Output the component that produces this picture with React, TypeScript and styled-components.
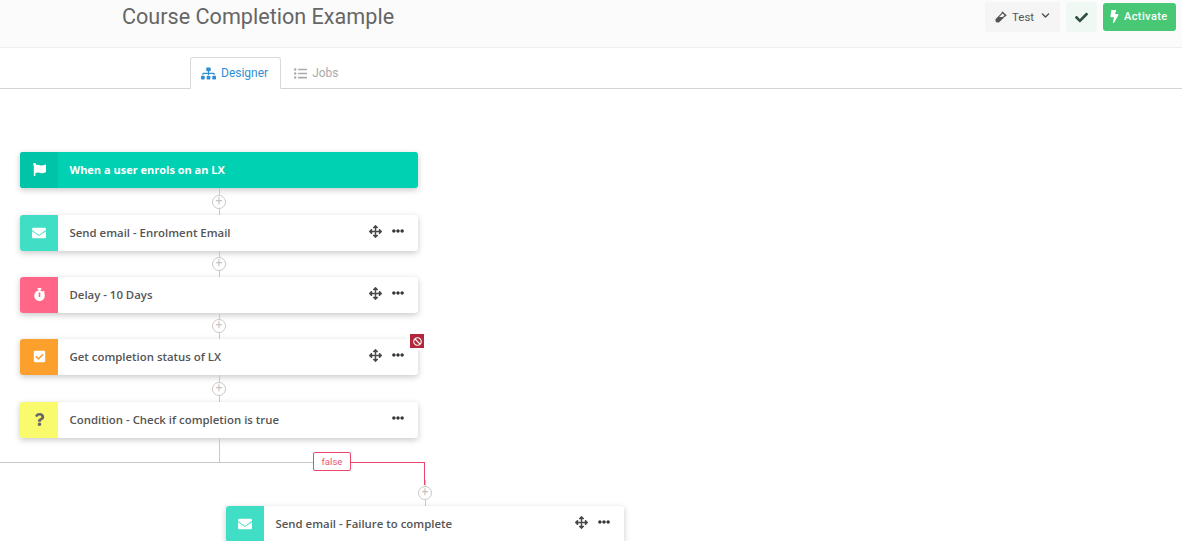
import React from "react";
import styled, { createGlobalStyle } from "styled-components";
import { FaFlag, FaEnvelope, FaStopwatch, FaCheckSquare, FaQuestion, FaArrowsAlt, FaEllipsisH, FaVial, FaBolt, FaCheck, FaChevronDown, FaSitemap, FaListUl, FaBan } from "react-icons/fa";

const Global = createGlobalStyle`
  html, body { margin: 0; padding: 0; background: #fff; height: 100%; overflow: hidden; }
  * { box-sizing: border-box; }
`;
const Page = styled.div`width: 1182px; height: 541px; overflow: hidden; font-family: Roboto, sans-serif;`;
const Header = styled.header`
  height: 48px; background: #fbfbfb; border-bottom: 1px solid #efefef;
  display: flex; justify-content: space-between; padding: 2px 6px 0 122px;
`;
const Title = styled.h1`margin: 0; font: 400 21.6px/29px Roboto, sans-serif; color: #666;`;
const Actions = styled.div`display: flex; align-items: flex-start; gap: 6px;`;
const TestButton = styled.div`
  width: 75px; height: 30px; background: #f5f5f5; border-radius: 3px; color: #555;
  display: flex; align-items: center; gap: 5px; padding-left: 10px; font-size: 11.5px;
  svg:last-child { margin-left: 2px; margin-top: -3px; }
`;
const CheckButton = styled.div`
  width: 31px; height: 30px; background: #eff8f3; border-radius: 3px; color: #2f4f3f;
  display: flex; align-items: center; justify-content: center;
`;
const ActivateButton = styled.div`
  width: 73px; height: 28px; margin-top: 1px; padding-bottom: 2px; background: #48c774; border-radius: 3px; color: #fff;
  display: flex; align-items: center; gap: 3px; padding-left: 5px; font-size: 11px; font-weight: 500; letter-spacing: .4px;
`;
const Tabs = styled.nav`height: 41px; border-bottom: 1px solid #d4d4d4; display: flex; align-items: flex-end; padding-left: 190px;`;
const Tab = styled.div<{ $active?: boolean }>`
  height: 32px; margin-bottom: -1px; display: flex; align-items: center; gap: 5px; font-size: 12px;
  padding: 0 12px 0 ${p => (p.$active ? 10 : 12)}px;
  color: ${p => (p.$active ? "#2f8fd6" : "#aaa")};
  background: ${p => (p.$active ? "#fff" : "transparent")};
  border: 1px solid ${p => (p.$active ? "#d9d9d9" : "transparent")};
  border-bottom-color: ${p => (p.$active ? "#fff" : "transparent")};
  border-radius: 3px 3px 0 0;
`;
const Canvas = styled.main`position: relative; height: 452px; padding: 63px 0 0 20px;`;
const Flow = styled.div`width: 398px; display: flex; flex-direction: column;`;
const Card = styled.div<{ $main?: boolean }>`
  position: relative; width: 398px; height: 36px; flex: none; display: flex; align-items: center;
  background: ${p => (p.$main ? "#00d1b2" : "#fff")}; border-radius: 3px;
  box-shadow: 0 2px 6px rgba(0,0,0,.22);
`;
const IconBox = styled.div<{ $color: string; $fg?: string }>`
  width: 38px; height: 36px; flex: none; padding-bottom: 1px; background: ${p => p.$color}; color: ${p => p.$fg || "#fff"};
  border-radius: 3px 0 0 3px; display: flex; align-items: center; justify-content: center;
`;
const Label = styled.div<{ $main?: boolean }>`
  flex: 1; padding: 0 0 2px 11.5px;
  font: ${p => (p.$main ? "700 11px" : "600 11.4px")} "Open Sans", sans-serif;
  color: ${p => (p.$main ? "#fff" : "#555")};
`;
const Tools = styled.div`display: flex; align-items: center; gap: 10px; padding: 0 14px 4px 0; color: #363636;`;
const Move = styled(FaArrowsAlt)`color: #4a4a4a;`;
const Connector = styled.div<{ $h: number }>`
  height: ${p => p.$h}px; flex: none; position: relative; width: 1px; background: #c8c8c8; margin-left: 199px;
`;
const Plus = styled.div`
  position: absolute; left: -7px; top: 50%; width: 14px; height: 14px; transform: translateY(-50%);
  border: 1px solid #c9c9c9; border-radius: 50%; background: #fff; color: #c4c4c4;
  font: 400 12px/11px Roboto, sans-serif; text-align: center;
`;
const ErrorBadge = styled.div`
  position: absolute; right: -6px; top: -5px; width: 14px; height: 14px; background: #b3273a; color: #fff;
  display: flex; align-items: center; justify-content: center; box-shadow: 0 0 0 3px #fff;
`;
const TrunkV = styled.div`position: absolute; left: 219px; top: 349px; width: 1px; height: 25px; background: #c8c8c8;`;
const TrunkH = styled.div`position: absolute; left: 0; top: 373px; width: 314px; height: 1px; background: #c8c8c8;`;
const FalseTag = styled.div`
  position: absolute; left: 313px; top: 363px; width: 38px; height: 19px; border: 1px solid #e8476a; border-radius: 2px;
  background: #fff; color: #e8567a; font: 400 9.6px/17px Roboto, sans-serif; text-align: center;
`;
const RedH = styled.div`position: absolute; left: 351px; top: 373px; width: 74px; height: 1px; background: #e8476a;`;
const RedV = styled.div`position: absolute; left: 424px; top: 373px; width: 1px; height: 23px; background: #e8476a;`;
const BranchConnector = styled.div`position: absolute; left: 425px; top: 391px; width: 1px; height: 26px; background: #c8c8c8;`;
const BranchCard = styled(Card)`position: absolute; left: 226px; top: 417px;`;

const nodes = [
  { icon: <FaEnvelope size={14} />, color: "#40dfc5", text: "Send email - Enrolment Email", move: true, gap: 26 },
  { icon: <FaStopwatch size={13} />, color: "#ff6687", text: "Delay - 10 Days", move: true, gap: 26 },
  { icon: <FaCheckSquare size={13} />, color: "#fba02c", text: "Get completion status of LX", move: true, gap: 27, error: true },
  { icon: <FaQuestion size={13} />, color: "#f9fb6c", fg: "#666", text: "Condition - Check if completion is true", gap: 0 },
];

export default function App() {
  return (
    <Page>
      <Global />
      <Header>
        <Title>Course Completion Example</Title>
        <Actions>
          <TestButton><FaVial size={12} />Test<FaChevronDown size={9} /></TestButton>
          <CheckButton><FaCheck size={13} /></CheckButton>
          <ActivateButton><FaBolt size={13} />Activate</ActivateButton>
        </Actions>
      </Header>
      <Tabs>
        <Tab $active><FaSitemap size={15} />Designer</Tab>
        <Tab><FaListUl size={13} />Jobs</Tab>
      </Tabs>
      <Canvas>
        <Flow>
          <Card $main>
            <IconBox $color="#00c4a7"><FaFlag size={13} /></IconBox>
            <Label $main>When a user enrols on an LX</Label>
          </Card>
          <Connector $h={27}><Plus>+</Plus></Connector>
          {nodes.map(n => (
            <React.Fragment key={n.text}>
              <Card>
                <IconBox $color={n.color} $fg={n.fg}>{n.icon}</IconBox>
                <Label>{n.text}</Label>
                <Tools>
                  {n.move && <Move size={13} />}
                  <FaEllipsisH size={12} />
                </Tools>
                {n.error && <ErrorBadge><FaBan size={9} /></ErrorBadge>}
              </Card>
              {n.gap > 0 && <Connector $h={n.gap}><Plus>+</Plus></Connector>}
            </React.Fragment>
          ))}
        </Flow>
        <TrunkV />
        <TrunkH />
        <BranchConnector><Plus>+</Plus></BranchConnector>
        <RedH />
        <RedV />
        <FalseTag>false</FalseTag>
        <BranchCard>
          <IconBox $color="#40dfc5"><FaEnvelope size={14} /></IconBox>
          <Label>Send email - Failure to complete</Label>
          <Tools><Move size={13} /><FaEllipsisH size={12} /></Tools>
        </BranchCard>
      </Canvas>
    </Page>
  );
}
